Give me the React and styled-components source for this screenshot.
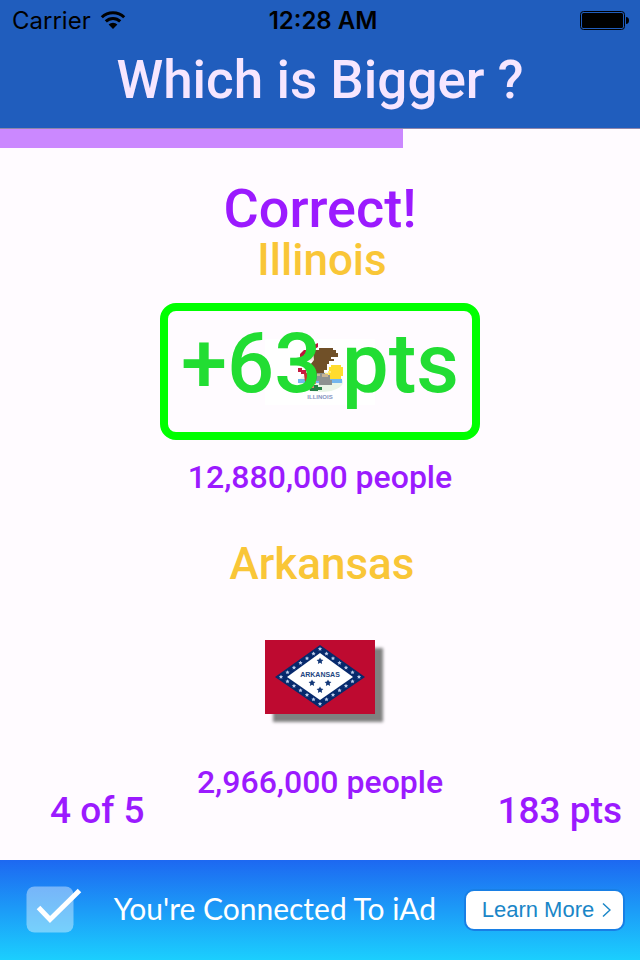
import React from "react";
import styled, { createGlobalStyle } from "styled-components";

const GlobalStyle = createGlobalStyle`
  *, *::before, *::after { box-sizing: border-box; }
  body {
    margin: 0;
    background: #fffbff;
    font-family: Roboto, "Noto Sans", sans-serif;
  }
  h1, h2, h3, p { margin: 0; }
  button { font: inherit; cursor: pointer; }
`;

const Page = styled.div`
  display: flex;
  flex-direction: column;
  min-height: 100vh;
`;

const Header = styled.header`
  background: #205dbd;
  border-bottom: 1px solid #8f86ac;
  color: #f6e6ff;
`;

const StatusBar = styled.div`
  display: grid;
  grid-template-columns: 1fr auto 1fr;
  align-items: center;
  height: 40px;
  padding: 0 11px 0 12px;
  color: #000;
  font-family: Inter, sans-serif;
  font-size: 24px;
`;

const Carrier = styled.div`
  display: flex;
  align-items: center;
  gap: 9px;
`;

const Clock = styled.time`
  padding-left: 5px;
  font-weight: 600;
`;

const BatterySlot = styled.div`
  display: flex;
  justify-content: flex-end;
`;

const Title = styled.h1`
  height: 88px;
  font-size: 53px;
  font-weight: 500;
  line-height: 80px;
  text-align: center;
  white-space: nowrap;
`;

const Progress = styled.div`
  height: 19px;
`;

const ProgressFill = styled.div`
  height: 100%;
  background: #cb88ff;
`;

const Main = styled.main`
  display: flex;
  flex: 1;
  flex-direction: column;
  align-items: center;
`;

const Result = styled.h2`
  margin-top: 34px;
  color: #9b1aff;
  font-size: 54px;
  font-weight: 500;
  line-height: 54px;
`;

const StateName = styled.h3`
  margin-top: ${(p) => p.$gap}px;
  padding-left: 4px;
  color: #f9c637;
  font-size: 44px;
  font-weight: 500;
  line-height: 48px;
`;

const Choice = styled.button`
  position: relative;
  display: flex;
  align-items: center;
  justify-content: center;
  width: 50%;
  height: 137px;
  margin-top: ${(p) => p.$gap}px;
  padding: 0;
  background: none;
  border: 8px solid ${(p) => (p.$correct ? "#00ff00" : "transparent")};
  border-radius: 16px;

  svg { box-shadow: ${(p) => (p.$correct ? "none" : "8px 8px 3px #808080")}; }
`;

const Award = styled.span`
  position: absolute;
  inset: 0;
  display: flex;
  align-items: center;
  justify-content: center;
  padding-bottom: 16px;
  color: #22dd33;
  font-size: 83px;
  font-weight: 500;
  line-height: 88px;
  white-space: nowrap;
`;

const Population = styled.p`
  color: #9b1aff;
  font-size: 32px;
  font-weight: 500;
  line-height: 40px;
  white-space: nowrap;
`;

const FirstPopulation = styled(Population)`
  margin-top: 17px;
`;

const BottomRow = styled.div`
  display: grid;
  grid-template-columns: 1fr auto 1fr;
  width: 100%;
  height: 72px;
  margin-top: 17px;
`;

const Stat = styled.p`
  align-self: end;
  padding: 0 18px 0 50px;
  color: #9b1aff;
  font-size: 37px;
  font-weight: 500;
  line-height: 46px;
  white-space: nowrap;
`;

const Score = styled(Stat)`
  justify-self: end;
  padding-left: 0;
`;

const AdBanner = styled.aside`
  display: flex;
  align-items: center;
  height: 100px;
  padding: 0 15px 0 26px;
  background: linear-gradient(#1d68f1, #1bcffe);
`;

const AdText = styled.p`
  flex: 1;
  padding: 0 0 4px 4px;
  color: #fff;
  font-family: Lato, sans-serif;
  font-size: 30px;
  line-height: 40px;
  text-align: center;
  white-space: nowrap;
`;

const LearnMore = styled.button`
  display: flex;
  align-items: center;
  justify-content: center;
  gap: 8px;
  width: 161px;
  height: 42px;
  padding: 0 0 0 4px;
  background: #fff;
  border: 2px solid #187fe5;
  border-radius: 10px;
  color: #1a86c7;

  && {
    font-family: "Liberation Sans", sans-serif;
    font-size: 22px;
  }
`;

const CheckMark = styled.svg`
  align-self: flex-start;
  margin-top: 24px;
`;

function WifiIcon() {
  return (
    <svg width="26" height="20" viewBox="0 0 26 20" aria-label="Wi-Fi">
      <g fill="none" stroke="#000" strokeWidth="3">
        <path d="M1.8 7.2a16 16 0 0 1 22.4 0" />
        <path d="M5.8 11.4a10.2 10.2 0 0 1 14.4 0" />
      </g>
      <path d="M13 19l-4.4-4.5a6.3 6.3 0 0 1 8.8 0z" />
    </svg>
  );
}

function BatteryIcon() {
  return (
    <svg width="49" height="19" viewBox="0 0 49 19" aria-label="Battery full">
      <rect x="0.5" y="0.5" width="44" height="18" rx="3" fill="none" stroke="#000" />
      <rect x="2" y="2" width="41" height="15" rx="1.5" />
      <path d="M46 6c2 0 3 1.5 3 3.5S48 13 46 13z" />
    </svg>
  );
}

function IllinoisFlag() {
  return (
    <svg width="110" height="66" viewBox="0 0 110 66" role="img" aria-label="Flag of Illinois">
      <rect width="110" height="66" fill="#fff" />
      <ellipse cx="56" cy="43" rx="22" ry="10" fill="#e9f5e7" />
      <path d="M33 40h44v4H33z" fill="#73b7ee" />
      <path d="M64 28h2v-2h10v2h2v9h-2v3H64z" fill="#ffdc2e" />
      <path d="M60 34h3v-2h3v2h-2v4h-4z" fill="#ffed75" />
      <path d="M35 15l4-4h5V8l9-4v4l-8 5-6 3v3h-4z" fill="#bc1539" />
      <path d="M36 19h4l4-5h5v8l-8-1-2 3z" fill="#f6e4dc" />
      <path d="M41 17h3v3h-3z" fill="#f3b33c" />
      <path d="M48 11h6V9h14v2h3v3h2v4h-7v2h3v2h-5v3h-2v6h-3v4h-3v3h-6v-4h-3l-2-8 4-5z" fill="#705028" />
      <path d="M33 29h4v2h4v4h-5v-2h-3z" fill="#c51c40" />
      <path d="M39 35l4-2 5 6-3 4h-5z" fill="#c8332f" />
      <path d="M46 34h4v2h4v6h-7z" fill="#124b8d" />
      <path d="M52 34h8v2h5v5h2v5H54v-4h-3z" fill="#8d9291" />
      <path d="M57 35h6v3h-6zM52 35h3v2h-3z" fill="#c9b593" />
      <path d="M43 42h8v3h-2v4h-6z" fill="#ee7772" />
      <path d="M44 49h5v-3h4v2h4v3h-4v1h-8z" fill="#258245" />
      <text x="55" y="60" textAnchor="middle" fontFamily="Liberation Sans, sans-serif" fontSize="6" fontWeight="700" fill="#8795c2">ILLINOIS</text>
    </svg>
  );
}

const BORDER_STARS = Array.from({ length: 24 }, (_, i) => {
  const corners = [[55, 9], [94, 37], [55, 64], [16, 37], [55, 9]];
  const side = Math.floor(i / 6);
  const t = (i % 6) / 6;
  const [ax, ay] = corners[side];
  const [bx, by] = corners[side + 1];
  return [ax + (bx - ax) * t, ay + (by - ay) * t];
});

const CENTER_STARS = [[55, 21], [47, 43], [63, 43], [55, 50]];

function starPath(cx, cy, r) {
  return (
    Array.from({ length: 10 }, (_, i) => {
      const radius = i % 2 ? r * 0.5 : r;
      const angle = (Math.PI * i) / 5 - Math.PI / 2;
      return `${i ? "L" : "M"}${cx + radius * Math.cos(angle)} ${cy + radius * Math.sin(angle)}`;
    }).join("") + "Z"
  );
}

function ArkansasFlag() {
  return (
    <svg width="110" height="74" viewBox="0 0 110 74" role="img" aria-label="Flag of Arkansas">
      <rect width="110" height="74" fill="#be0a30" />
      <path d="M55 5l45 32-45 31L10 37z" fill="#06296c" />
      <path d="M55 13l33 24-33 23-33-23z" fill="#fff" />
      {BORDER_STARS.map(([x, y]) => (
        <path key={`${x}-${y}`} d={starPath(x, y, 2.2)} fill="#bacbea" />
      ))}
      {CENTER_STARS.map(([x, y]) => (
        <path key={`${x}-${y}`} d={starPath(x, y, 3.6)} fill="#143979" />
      ))}
      <text x="55" y="37" textAnchor="middle" fontFamily="Liberation Sans, sans-serif" fontSize="7" fontWeight="700" fill="#234580">ARKANSAS</text>
    </svg>
  );
}

function CheckIcon() {
  return (
    <CheckMark width="56" height="50" viewBox="0 0 56 50" aria-hidden="true">
      <rect x="0.5" y="2.5" width="47" height="46" rx="8" fill="#fff" fillOpacity="0.4" />
      <path d="M12.5 23.5L24 35.5L53.5 6.5" fill="none" stroke="#fff" strokeWidth="5" />
    </CheckMark>
  );
}

function ChevronIcon() {
  return (
    <svg width="9" height="16" viewBox="0 0 9 16" aria-hidden="true">
      <path d="M1 1.5l7 6.5-7 6.5" fill="none" stroke="#1a86c7" strokeWidth="1.5" />
    </svg>
  );
}

export default function App() {
  const percent = 63;
  return (
    <>
      <GlobalStyle />
      <Page>
        <Header>
          <StatusBar>
            <Carrier>Carrier <WifiIcon /></Carrier>
            <Clock>12:28 AM</Clock>
            <BatterySlot><BatteryIcon /></BatterySlot>
          </StatusBar>
          <Title>Which is Bigger ?</Title>
        </Header>
        <Progress role="progressbar" aria-label="Time left" aria-valuenow={percent}>
          <ProgressFill style={{ width: `${percent}%` }} />
        </Progress>
        <Main>
          <Result>Correct!</Result>
          <StateName $gap={0}>Illinois</StateName>
          <Choice $correct $gap={19}>
            <IllinoisFlag />
            <Award>+63 pts</Award>
          </Choice>
          <FirstPopulation>12,880,000 people</FirstPopulation>
          <StateName $gap={43}>Arkansas</StateName>
          <Choice $gap={20}>
            <ArkansasFlag />
          </Choice>
          <BottomRow>
            <Stat>4 of 5</Stat>
            <Population>2,966,000 people</Population>
            <Score>183 pts</Score>
          </BottomRow>
        </Main>
        <AdBanner>
          <CheckIcon />
          <AdText>You're Connected To iAd</AdText>
          <LearnMore>Learn More <ChevronIcon /></LearnMore>
        </AdBanner>
      </Page>
    </>
  );
}
